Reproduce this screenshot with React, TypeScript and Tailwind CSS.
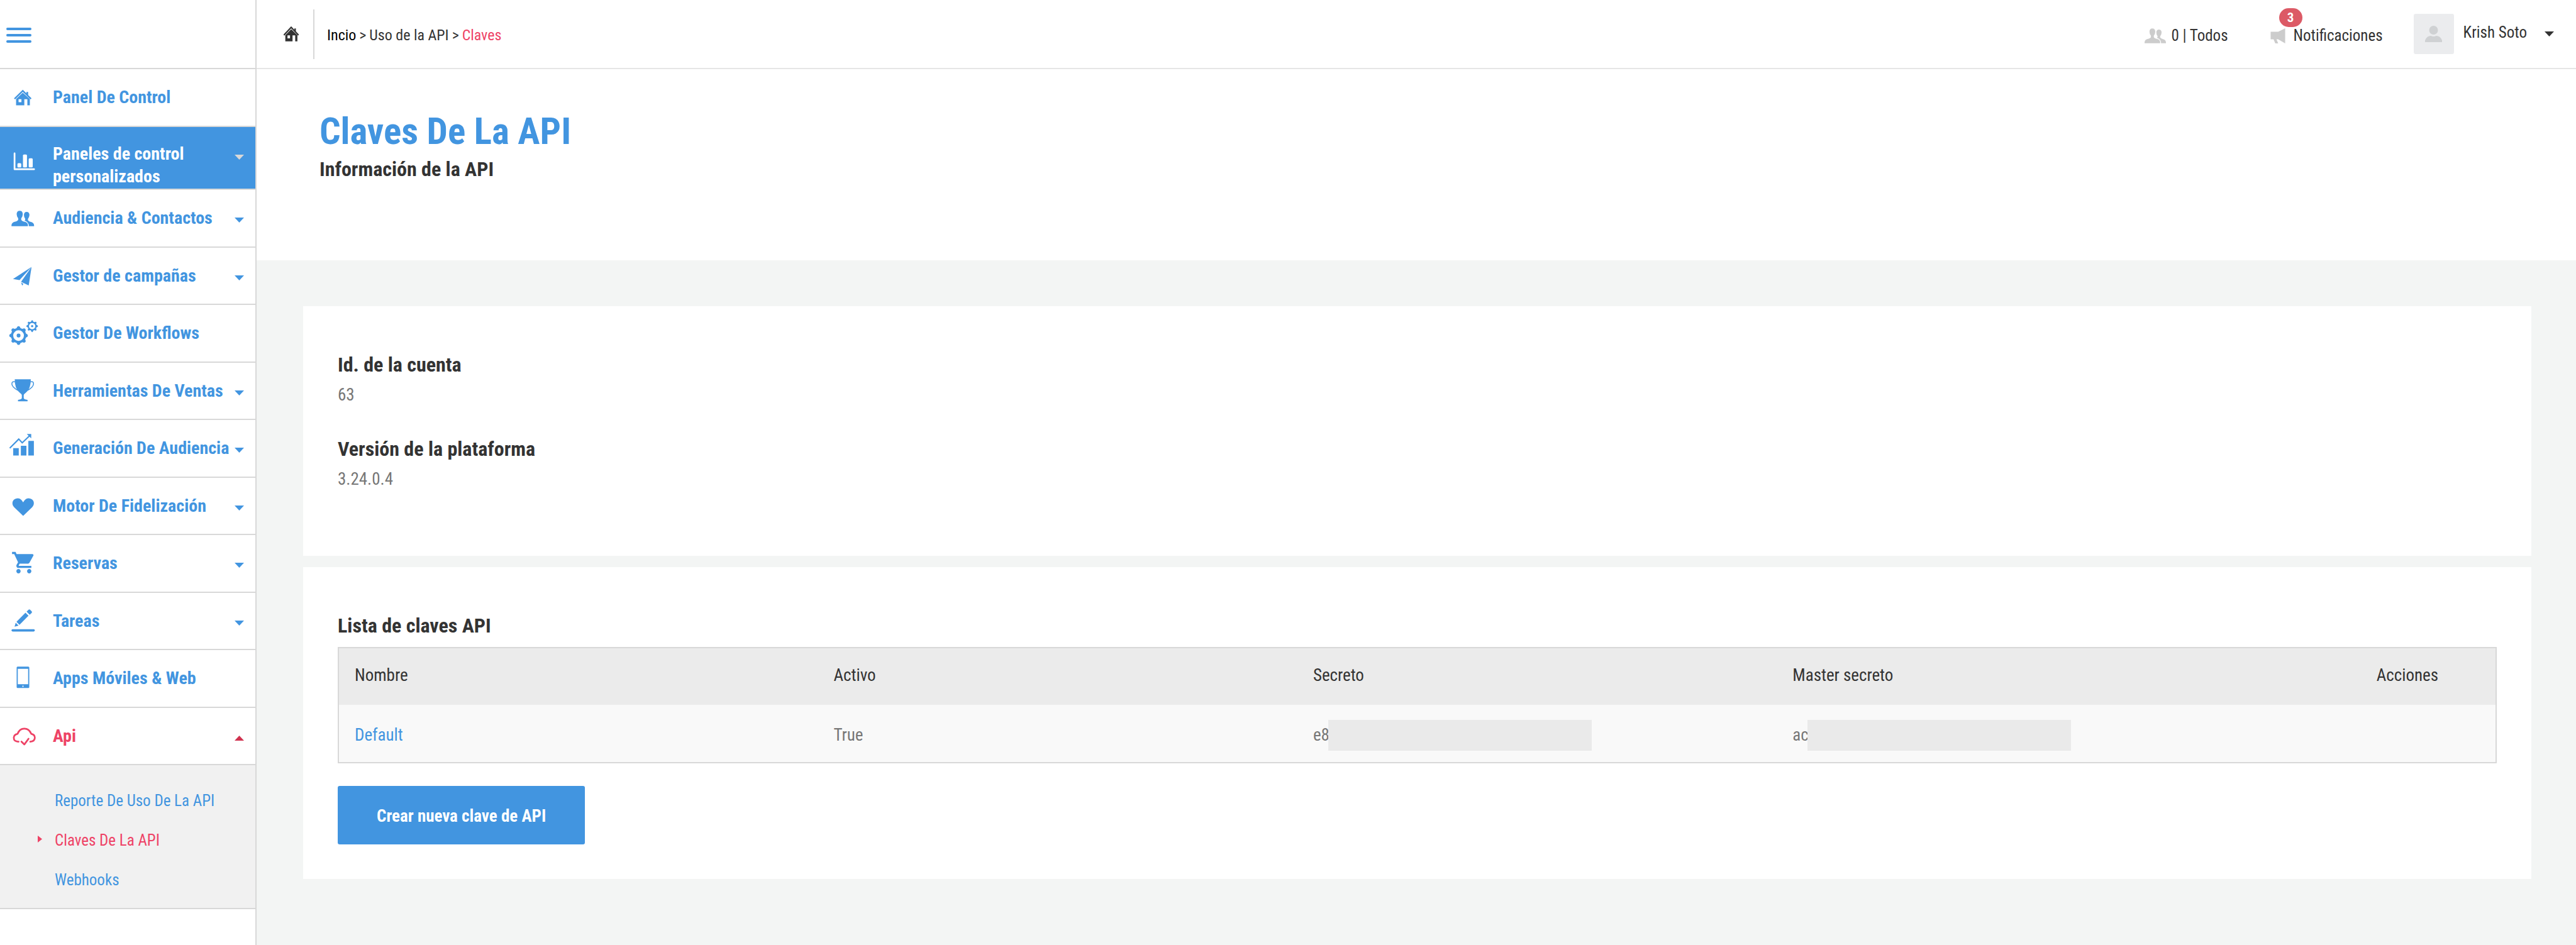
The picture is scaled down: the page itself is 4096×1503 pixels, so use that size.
import React from "react";

type IconProps = { children: React.ReactNode };

function MenuIcon({ children }: IconProps) {
  return (
    <svg viewBox="0 0 276 294" className="h-[90px] w-[84px] shrink-0" fill="currentColor" aria-hidden="true">
      {children}
    </svg>
  );
}

function HouseShape() {
  return (
    <>
      <path d="M78 152 L119 112 L160 152" fill="none" stroke="currentColor" strokeWidth="8" strokeLinecap="round" />
      <path d="M138 118h9v18l-9-9z" />
      <path
        fillRule="evenodd"
        d="M84 155 L119 122 L156 155 V188 H143 V156 H127 V188 H84 Z M97 156 V172 H112 V156 Z"
      />
    </>
  );
}

function UsersShape() {
  return (
    <>
      <path d="M60 189 V183 Q62 170 76 166 Q92 162 95 156 V148 Q87 138 87 125 Q88 108 103 108 Q118 108 119 125 Q119 138 111 148 V156 Q114 162 130 166 Q145 170 146 183 V189 Z" />
      <path d="M151 189 Q151 167 128 159 Q132 158 132 151 Q125 143 125 130 Q126 114 139 114 Q153 114 154 130 Q153 143 146 151 V157 Q148 163 162 167 Q177 171 178 184 V189 Z" />
    </>
  );
}

function Gear({ cx, cy, ring, ringWidth, tip, tooth, dot }: Record<"cx" | "cy" | "ring" | "ringWidth" | "tip" | "tooth" | "dot", number>) {
  return (
    <g>
      <circle cx={cx} cy={cy} r={ring} fill="none" stroke="currentColor" strokeWidth={ringWidth} />
      <circle cx={cx} cy={cy} r={dot} />
      {[0, 45, 90, 135, 180, 225, 270, 315].map((a) => (
        <path
          key={a}
          transform={`rotate(${a} ${cx} ${cy})`}
          d={`M${cx - tooth} ${cy - ring} L${cx - tooth / 2} ${cy - tip + 3} Q${cx} ${cy - tip - 3} ${cx + tooth / 2} ${cy - tip + 3} L${cx + tooth} ${cy - ring} Z`}
        />
      ))}
    </g>
  );
}

const icons = {
  home: <HouseShape />,
  chart: (
    <>
      <path d="M76 137 V220 H178" fill="none" stroke="currentColor" strokeWidth="9" strokeLinecap="round" strokeLinejoin="round" />
      <rect x="91" y="188" width="20" height="22" rx="5" />
      <rect x="120" y="143" width="21" height="67" rx="5" />
      <rect x="150" y="163" width="21" height="47" rx="5" />
    </>
  ),
  users: <UsersShape />,
  plane: (
    <>
      <path d="M165 99 L68 163 L102 168 Z" />
      <path d="M165 99 L150 196 L110 177 Z" />
      <path d="M110 181 L122 188 L116 197 Z" />
    </>
  ),
  gears: (
    <>
      <Gear cx={97} cy={159} ring={34} ringWidth={12} tip={49} tooth={13} dot={10} />
      <Gear cx={168} cy={110} ring={20} ringWidth={7} tip={31} tooth={8} dot={6} />
    </>
  ),
  trophy: (
    <>
      <path d="M77 85 H161 Q161 136 136 154 Q125 162 124 168 V184 Q126 191 144 193 V200 H94 V193 Q112 191 114 184 V168 Q113 162 102 154 Q77 136 77 85 Z" />
      <path d="M80 99 Q62 94 62 110 Q63 126 92 142 M158 99 Q176 94 175 110 Q174 126 146 142" fill="none" stroke="currentColor" strokeWidth="5" />
    </>
  ),
  growth: (
    <>
      <path d="M69 146h29v39H69z M109 134h29v51h-29z M148 108h29v77h-29z" />
      <path d="M51 146 L98 99 L116 118 L154 82" fill="none" stroke="currentColor" strokeWidth="7" />
      <path d="M140 72 H163 V95 Z" />
    </>
  ),
  heart: (
    <path d="M121 198 L74 153 C56 134 66 106 93 106 C107 106 114 116 121 127 C128 116 135 106 149 106 C176 106 186 134 168 153 Z" />
  ),
  cart: (
    <path
      transform="translate(57.4 76) scale(5.6)"
      d="M7 18c-1.1 0-1.99.9-1.99 2S5.9 22 7 22s2-.9 2-2-.9-2-2-2zM1 2v2h2l3.6 7.59-1.35 2.45c-.16.28-.25.61-.25.96 0 1.1.9 2 2 2h12v-2H7.42c-.14 0-.25-.11-.25-.25l.03-.12.9-1.63h7.45c.75 0 1.41-.41 1.75-1.03l3.58-6.49c.08-.14.12-.31.12-.48 0-.55-.45-1-1-1H5.21l-.94-2H1zm16 16c-1.1 0-1.99.9-1.99 2s.89 2 1.99 2 2-.9 2-2-.9-2-2-2z"
    />
  ),
  pencil: (
    <>
      <path d="M139 97 L149 87 Q154 83 158 88 L166 96 Q169 100 165 104 L155 113 Z" />
      <path d="M133 103 L149 118 L102 166 L86 150 Z" />
      <path d="M82 155 L97 170 L76 176 Z" />
      <rect x="60" y="189" width="122" height="12" rx="6" />
    </>
  ),
  phone: (
    <path
      fillRule="evenodd"
      d="M92 85 H148 Q153 85 153 90 V192 Q153 197 148 197 H92 Q87 197 87 192 V90 Q87 85 92 85 Z M93 97 V177 H147 V97 Z M117 185 V191 H123 V185 Z"
    />
  ),
  cloud: (
    <g fill="none" stroke="currentColor" strokeWidth="9" strokeLinecap="round" strokeLinejoin="round">
      <path d="M97 175 Q72 176 72 154 Q73 138 92 134 Q102 107 127 107 Q152 107 163 134 Q182 138 182 154 Q182 173 158 175" />
      <path d="M112 175 L127 190 L149 160" />
    </g>
  ),
};

type Item = { label: string; icon: keyof typeof icons; expandable?: boolean };

const items: Item[] = [
  { label: "Panel De Control", icon: "home" },
  { label: "Paneles de control personalizados", icon: "chart", expandable: true },
  { label: "Audiencia & Contactos", icon: "users", expandable: true },
  { label: "Gestor de campañas", icon: "plane", expandable: true },
  { label: "Gestor De Workflows", icon: "gears" },
  { label: "Herramientas De Ventas", icon: "trophy", expandable: true },
  { label: "Generación De Audiencia", icon: "growth", expandable: true },
  { label: "Motor De Fidelización", icon: "heart", expandable: true },
  { label: "Reservas", icon: "cart", expandable: true },
  { label: "Tareas", icon: "pencil", expandable: true },
  { label: "Apps Móviles & Web", icon: "phone" },
];

function Caret({ className, up = false }: { className: string; up?: boolean }) {
  return (
    <svg viewBox="0 0 15 8" className={`h-[8px] w-[15px] shrink-0 ${className}`} fill="currentColor" aria-hidden="true">
      <path d={up ? "M0 8 L7.5 0 L15 8 Z" : "M0 0 H15 L7.5 8 Z"} />
    </svg>
  );
}

function MenuRow({ item }: { item: Item }) {
  const active = item.icon === "chart";
  return (
    <li
      className={
        active
          ? "border-b-2 border-[#d8d8d8] bg-[#4295e0] text-white"
          : "border-b-2 border-[#d8d8d8] text-[#4295e0] odd:h-[92px] even:h-[91px]"
      }
    >
      <a href="#" className="flex items-start">
        <MenuIcon>{icons[item.icon]}</MenuIcon>
        <span className={active ? "w-[240px] pt-[25px] pb-px leading-[36px]" : "leading-[90px] whitespace-nowrap"}>{item.label}</span>
        {item.expandable && <Caret className={active ? "mt-[44px] mr-[18px] ml-auto text-[#d8d8d8]" : "mt-[44px] mr-[18px] ml-auto"} />}
      </a>
    </li>
  );
}

function Sidebar() {
  return (
    <aside className="w-[408px] shrink-0 border-r-2 border-[#d8d8d8] bg-white text-[28px] font-bold">
      <div className="flex h-[110px] items-center border-b-2 border-[#d8d8d8] pl-[10px]">
        <button type="button" aria-label="Menú" className="mt-[4px] text-[#4295e0]">
          <svg viewBox="0 0 40 25" className="h-[25px] w-[40px]" fill="currentColor" aria-hidden="true">
            <rect width="40" height="4" rx="2" />
            <rect y="10" width="40" height="4" rx="2" />
            <rect y="20" width="40" height="4" rx="2" />
          </svg>
        </button>
      </div>
      <nav>
        <ul>
          {items.map((item) => (
            <MenuRow key={item.label} item={item} />
          ))}
          <li>
            <a href="#" className="flex h-[91px] items-start border-b-2 border-[#d8d8d8] text-[#ee4366]">
              <MenuIcon>{icons.cloud}</MenuIcon>
              <span className="leading-[90px]">Api</span>
              <Caret up className="mt-[44px] mr-[18px] ml-auto text-[#d0324f]" />
            </a>
            <ul className="border-b-2 border-[#d8d8d8] bg-[#f1f1f1] pt-[25px] pb-[13px] pl-[87px] text-[25px] font-normal text-[#4295e0]">
              <li className="h-[63px] leading-[63px]">
                <a href="#">Reporte De Uso De La API</a>
              </li>
              <li className="relative h-[63px] leading-[63px] text-[#ee4366]">
                <svg viewBox="0 0 7 11" className="absolute top-[24px] left-[-27px] h-[11px] w-[7px]" fill="currentColor" aria-hidden="true">
                  <path d="M0 0 L7 5.5 L0 11 Z" />
                </svg>
                <a href="#" aria-current="page">Claves De La API</a>
              </li>
              <li className="h-[63px] leading-[63px]">
                <a href="#">Webhooks</a>
              </li>
            </ul>
          </li>
        </ul>
      </nav>
    </aside>
  );
}

function TopBar() {
  return (
    <header className="flex h-[110px] items-center border-b-2 border-[#e6e6e6] bg-white pr-[35px] text-[25px] text-[#333]">
      <a href="#" aria-label="Inicio" className="flex h-[79px] items-center border-r-2 border-[#d8d8d8] pr-[23px] pl-[43px]">
        <svg viewBox="74 107 90 82" className="h-[24px] w-[24px]" preserveAspectRatio="none" fill="currentColor" aria-hidden="true">
          <HouseShape />
        </svg>
      </a>
      <nav aria-label="Ruta" className="flex gap-[5px] pt-[4px] pl-[20px] text-[24px] whitespace-nowrap">
        <a href="#" className="text-black">Incio</a>
        <span>&gt;</span>
        <a href="#">Uso de la API</a>
        <span>&gt;</span>
        <span className="text-[#ee4366]">Claves</span>
      </nav>
      <div className="ml-auto flex items-center whitespace-nowrap">
        <a href="#" className="flex items-center gap-[8px] pt-[6px]">
          <svg viewBox="60 108 118 81" className="h-[24px] w-[34px] text-[#ccc]" fill="currentColor" aria-hidden="true">
            <UsersShape />
          </svg>
          0 | Todos
        </a>
        <a href="#" className="relative ml-[67px] flex items-center gap-[13px] pt-[6px]">
          <svg viewBox="0 0 25 26" className="h-[24px] w-[24px] text-[#ccc]" fill="currentColor" aria-hidden="true">
            <path d="M0 6 H13 L25 0 V26 L13 19 H10 L13 26 H8 L5 19 H0 Z" />
          </svg>
          Notificaciones
          <span className="absolute top-[-19px] left-[14px] flex h-[30px] w-[37px] items-center justify-center rounded-full bg-[#dc5a66] text-[21px] font-bold text-white">
            3
          </span>
        </a>
        <button type="button" className="ml-[49px] flex items-center">
          <span className="flex size-[64px] items-center justify-center rounded-[3px] bg-[#ebecee]">
            <svg viewBox="0 0 27 26" className="h-[26px] w-[27px]" fill="#cfd1d3" aria-hidden="true">
              <ellipse cx="13.5" cy="7" rx="7" ry="7" />
              <path d="M0 26 V23 Q3 16 9 16 Q13.5 18 18 16 Q24 16 27 23 V26 Z" />
            </svg>
          </span>
          <span className="ml-[15px] pb-[5px]">Krish Soto</span>
          <Caret className="ml-[28px]" />
        </button>
      </div>
    </header>
  );
}

function Secret({ prefix }: { prefix: string }) {
  return (
    <span className="flex items-center">
      {prefix}
      <span className="-ml-[2px] h-[49px] w-[419px] bg-[#eaeaea]" />
    </span>
  );
}

function KeysTable() {
  return (
    <table className="mt-[14px] w-full table-fixed border-2 border-[#d8d8d8] text-left text-[27px]">
      <colgroup>
        <col className="w-2/9" />
        <col className="w-2/9" />
        <col className="w-2/9" />
        <col className="w-2/9" />
        <col className="w-1/9" />
      </colgroup>
      <thead className="bg-[#ebebeb] text-[#333]">
        <tr className="h-[91px]">
          {["Nombre", "Activo", "Secreto", "Master secreto"].map((name) => (
            <th key={name} className="pb-[3px] pl-[25px] font-normal">{name}</th>
          ))}
          <th className="pr-[91px] pb-[3px] text-right font-normal">Acciones</th>
        </tr>
      </thead>
      <tbody className="bg-[#f9f9f9] text-[#777]">
        <tr className="h-[92px]">
          <td className="pt-[5px] pl-[25px]">
            <a href="#" className="text-[#4295e0]">Default</a>
          </td>
          <td className="pt-[5px] pl-[25px]">True</td>
          <td className="pt-[5px] pl-[25px]"><Secret prefix="e8" /></td>
          <td className="pt-[5px] pl-[25px]"><Secret prefix="ac" /></td>
          <td />
        </tr>
      </tbody>
    </table>
  );
}

export default function App() {
  return (
    <div className="flex min-h-screen bg-white font-['Roboto_Condensed',Roboto,sans-serif]">
      <Sidebar />
      <div className="flex min-w-0 flex-1 flex-col bg-[#f3f5f4]">
        <TopBar />
        <section className="bg-white pt-[67px] pb-[125px] pl-[100px] font-bold">
          <h1 className="text-[59px] leading-[64px] text-[#4295e0]">Claves De La API</h1>
          <p className="mt-[8px] text-[32px] leading-[40px] text-[#333]">Información de la API</p>
        </section>
        <main className="flex flex-col gap-[18px] pt-[73px] pr-[71px] pl-[74px]">
          <section className="bg-white px-[55px] pt-[73px] pb-[104px]">
            <h2 className="text-[32px] leading-[40px] font-bold text-[#333]">Id. de la cuenta</h2>
            <p className="mt-[10px] text-[27px] leading-[36px] text-[#777]">63</p>
            <h2 className="mt-[48px] text-[32px] leading-[40px] font-bold text-[#333]">Versión de la plataforma</h2>
            <p className="mt-[10px] text-[27px] leading-[36px] text-[#777]">3.24.0.4</p>
          </section>
          <section className="bg-white px-[55px] pt-[73px] pb-[55px]">
            <h2 className="text-[32px] leading-[40px] font-bold text-[#333]">Lista de claves API</h2>
            <KeysTable />
            <button type="button" className="mt-[36px] h-[93px] rounded-[3px] bg-[#4295e0] px-[62px] pt-[3px] text-[27px] font-bold text-white">
              Crear nueva clave de API
            </button>
          </section>
        </main>
      </div>
    </div>
  );
}
